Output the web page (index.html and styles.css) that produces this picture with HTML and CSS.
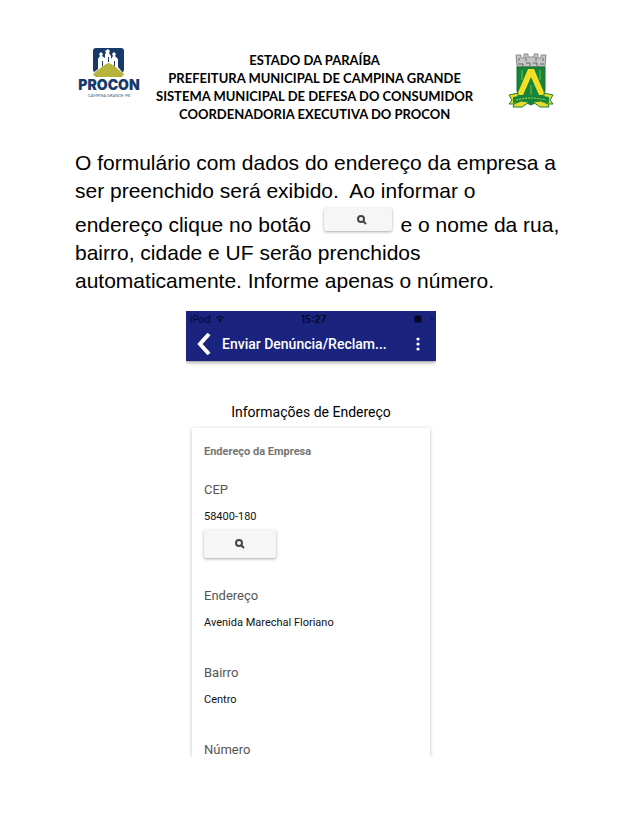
FILE: index.html
```html
<!DOCTYPE html>
<html lang="pt-BR">
<head>
<meta charset="utf-8">
<meta name="viewport" content="width=device-width, initial-scale=1">
<title>PROCON Campina Grande</title>
<link rel="stylesheet" href="styles.css">
</head>
<body>
<header class="letterhead">
  <svg class="logo" viewBox="0 0 62 50" role="img" aria-label="PROCON Campina Grande">
    <path fill="#173a6b" d="M18 0H43Q46 0 46 3V22L43 29H18L15 22V3Q15 0 18 0Z"/>
    <path fill="#fff" d="M20 21V11L22 8L21 6L23 4L25 6L24 8L27 10V6L28 5L27 3L30 1L32 3L31 5L33 8V11L35 8L34 6L36 4L38 6L37 8L40 11V19L45 25H15Z"/>
    <path fill="#173a6b" d="M24 13H25V18L24 19ZM30 9H31V14H30ZM36 13H37V19L36 18Z"/>
    <path fill="#b5b43b" d="M31 15Q33 15 46 26Q45 29 41 29H20Q16 29 15 26Q28 15 31 15Z"/>
    <text class="logo-name" x="31" y="42" text-anchor="middle">PROCON</text>
    <text class="logo-city" x="31" y="49" text-anchor="middle">CAMPINA GRANDE-PB</text>
  </svg>
  <div class="titles">
    <div>ESTADO DA PARAÍBA</div>
    <div>PREFEITURA MUNICIPAL DE CAMPINA GRANDE</div>
    <div>SISTEMA MUNICIPAL DE DEFESA DO CONSUMIDOR</div>
    <div>COORDENADORIA EXECUTIVA DO PROCON</div>
  </div>
  <svg class="crest" viewBox="0 0 46 56" role="img" aria-label="Brasão de Campina Grande">
    <path fill="#c4c4c4" stroke="#8a8a8a" d="M8 2H13V5H16V1H20V4H26V1H30V5H33V2H38L37 14H9Z"/>
    <path fill="none" stroke="#666" d="M11 5V8M18 4V8M28 4V8M35 5V8M10 11H15V13M18 10H22V13M25 10H29V13M32 11H36"/>
    <path fill="#14863b" stroke="#256b35" d="M9 14H37V38Q35 47 23 52Q11 47 9 38Z"/>
    <path stroke="#85b83e" fill="none" d="M14 17V27M32 17V27M23 32V44"/>
    <path fill="#f5df24" d="M20 16H26L37 42H31L23 24L15 42H9Z"/>
    <path fill="#eada29" stroke="#15853a" d="M1 42L10 40V51H1L4 47ZM45 42L36 40V51H45L42 47Z"/>
    <path fill="#15853a" d="M5 44Q23 40 41 44V50Q23 47 5 50Z"/>
    <path fill="none" stroke="#c3d34d" stroke-dasharray="2 1" d="M8 47Q23 43 38 47"/>
    <path fill="#eada29" stroke="#15853a" d="M6 51L13 48L21 49L14 54H5ZM40 51L33 48L25 49L32 54H41Z"/>
  </svg>
</header>
<main>
  <p class="instructions">O formulário com dados do endereço da empresa a<br>ser preenchido será exibido.&nbsp; Ao informar o<br>endereço clique no botão <button class="search inline" type="button" aria-label="Buscar CEP"><svg viewBox="0 0 10 10"><circle cx="4" cy="4" r="3"/><path d="M6 6L9 9"/></svg></button> e o nome da rua,<br>bairro, cidade e UF serão prenchidos<br>automaticamente. Informe apenas o número.</p>
  <section class="phone">
    <div class="appbar">
      <div class="status">
        <span class="device">iPod <svg viewBox="0 0 10 8"><path d="M1 3Q5 0 9 3M3 5Q5 3 7 5"/><circle cx="5" cy="6" r="1"/></svg></span>
        <span class="time">15:27</span>
        <span class="power"><svg viewBox="0 0 20 8"><path d="M1 1H7V7H1ZM18 3V5"/></svg></span>
      </div>
      <div class="toolbar">
        <button class="icon" type="button" aria-label="Voltar"><svg class="back" viewBox="0 0 14 22"><path d="M12 1L3 11L12 21"/></svg></button>
        <h1>Enviar Denúncia/Reclam...</h1>
        <button class="icon" type="button" aria-label="Mais opções"><svg class="more" viewBox="0 0 4 14"><circle cx="2" cy="2" r="1.6"/><circle cx="2" cy="7" r="1.6"/><circle cx="2" cy="12" r="1.6"/></svg></button>
      </div>
    </div>
    <h2>Informações de Endereço</h2>
    <form class="card">
      <h3>Endereço da Empresa</h3>
      <div class="field with-action">
        <label for="cep">CEP</label>
        <input id="cep" value="58400-180">
        <button class="search" type="button" aria-label="Buscar"><svg viewBox="0 0 10 10"><circle cx="4" cy="4" r="3"/><path d="M6 6L9 9"/></svg></button>
      </div>
      <div class="field">
        <label for="street">Endereço</label>
        <input id="street" value="Avenida Marechal Floriano">
      </div>
      <div class="field">
        <label for="district">Bairro</label>
        <input id="district" value="Centro">
      </div>
      <div class="field clipped">
        <label for="number">Número</label>
        <input id="number">
      </div>
    </form>
  </section>
</main>
</body>
</html>
```
FILE: styles.css
```css
* { box-sizing: border-box; }
body {
  margin: 0;
  padding: 48px 75px 69px;
  background: #fff;
  color: #000;
  font-family: "Liberation Sans", Arial, sans-serif;
}
button { border: 0; padding: 0; font: inherit; }
svg { display: block; }
h1, h2, h3, p { margin: 0; }

.letterhead {
  display: flex;
  padding: 0 9px 0 3px;
}
.logo { width: 62px; height: 50px; }
.logo-name { font: 900 14px Inter, sans-serif; fill: #173a6b; }
.logo-city { font: 4px Lato, sans-serif; fill: #48617f; }
.titles {
  margin-left: 16px;
  padding-top: 3px;
  font: 700 13px/18px Lato, sans-serif;
  text-align: center;
  white-space: nowrap;
}
.crest { width: 46px; height: 56px; margin: 5px 0 0 auto; }

.instructions {
  margin-top: 26px;
  font-size: 21px;
  line-height: 28px;
  white-space: nowrap;
}
.search {
  display: flex;
  align-items: center;
  justify-content: center;
  width: 72px;
  height: 28px;
  background: #f6f6f6;
  border-radius: 2px;
  box-shadow: 0 1px 3px rgba(0, 0, 0, .35);
}
.search svg { width: 10px; height: 10px; fill: none; stroke: #444; stroke-width: 2; }
.search.inline {
  display: inline-flex;
  width: 68px;
  height: 23px;
  margin: 3px 3px 0 7px;
  padding-left: 8px;
  vertical-align: 7px;
}

.phone { max-width: 250px; margin: 16px auto 0 111px; overflow: hidden; }
.appbar { background: #1a237e; box-shadow: 0 1px 4px rgba(0, 0, 0, .5); }
.status {
  display: grid;
  grid-template-columns: 1fr auto 1fr;
  align-items: center;
  height: 16px;
  padding: 0 2px 0 4px;
  color: #050824;
  font: 10px/16px Inter, sans-serif;
}
.device { display: flex; align-items: center; gap: 4px; }
.device svg { width: 10px; height: 8px; fill: #050824; }
.device path { fill: none; stroke: #050824; }
.time { padding-left: 3px; font-weight: 600; }
.power { justify-self: end; }
.power svg { width: 20px; height: 8px; fill: #050824; stroke: #050824; }
.toolbar { display: flex; align-items: center; height: 34px; padding: 0 16px 0 11px; color: #fff; }
.toolbar h1 { flex: 1; margin-left: 11px; font: 500 14px/20px Roboto, sans-serif; }
.icon { background: none; }
.back { width: 14px; height: 22px; fill: none; stroke: #fff; stroke-width: 4; }
.more { width: 4px; height: 14px; fill: #fff; }
.phone h2 { margin: 41px 0 6px; font: 400 14px/20px Roboto, sans-serif; text-align: center; }
.card {
  margin: 0 6px;
  padding: 16px 12px 0;
  box-shadow: 0 1px 4px rgba(0, 0, 0, .25);
  font-family: Roboto, sans-serif;
}
.card h3 { margin-bottom: 22px; color: #757575; font: 700 11px/16px Roboto, sans-serif; }
.field { margin-bottom: 32px; }
.field.with-action { margin-bottom: 30px; }
.field.clipped { height: 15px; margin-bottom: 0; overflow: hidden; }
.field label { display: block; color: #555; font-size: 13px; line-height: 16px; }
.field input {
  display: block;
  width: 100%;
  height: 20px;
  margin-top: 9px;
  padding: 0;
  border: 0;
  background: none;
  color: #111;
  font: 11px/20px Roboto, sans-serif;
}
.field .search { margin-top: 3px; }
```
